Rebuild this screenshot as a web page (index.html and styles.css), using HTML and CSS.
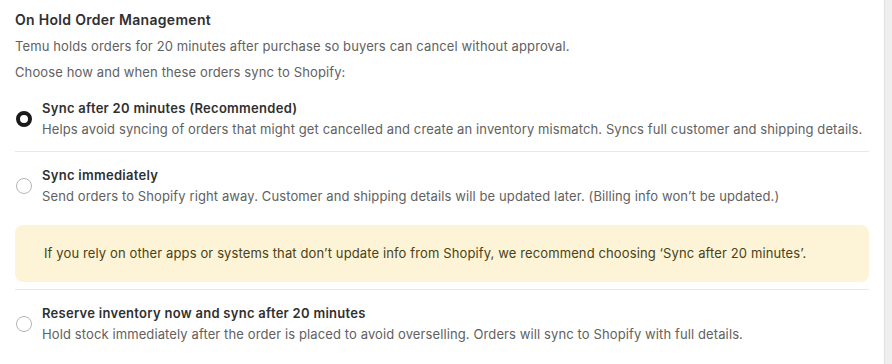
FILE: index.html
```html
<!DOCTYPE html>
<html lang="en">
<head>
<meta charset="utf-8">
<title>On Hold Order Management</title>
<link rel="stylesheet" href="styles.css">
</head>
<body>
<div class="page">
  <main class="content">
    <h2 class="title">On Hold Order Management</h2>
    <p class="intro first">Temu holds orders for 20 minutes after purchase so buyers can cancel without approval.</p>
    <p class="intro second">Choose how and when these orders sync to Shopify:</p>

    <div class="options">
      <label class="option opt-1">
        <span class="radio checked"></span>
        <span class="option-text">
          <span class="option-title">Sync after 20 minutes (Recommended)</span>
          <span class="option-desc">Helps avoid syncing of orders that might get cancelled and create an inventory mismatch. Syncs full customer and shipping details.</span>
        </span>
      </label>
      <div class="divider"></div>
      <label class="option opt-2">
        <span class="radio"></span>
        <span class="option-text">
          <span class="option-title">Sync immediately</span>
          <span class="option-desc">Send orders to Shopify right away. Customer and shipping details will be updated later. (Billing info won’t be updated.)</span>
        </span>
      </label>
      <div class="notice">If you rely on other apps or systems that don’t update info from Shopify, we recommend choosing ‘Sync after 20 minutes’.</div>
      <div class="divider after-notice"></div>
      <label class="option opt-3">
        <span class="radio"></span>
        <span class="option-text">
          <span class="option-title">Reserve inventory now and sync after 20 minutes</span>
          <span class="option-desc">Hold stock immediately after the order is placed to avoid overselling. Orders will sync to Shopify with full details.</span>
        </span>
      </label>
    </div>
  </main>
  <div class="scrollbar"></div>
</div>
</body>
</html>
```
FILE: styles.css
```css
html, body {
  margin: 0;
  padding: 0;
  background: #ffffff;
}
body {
  font-family: Inter, "Noto Sans", "Liberation Sans", sans-serif;
  color: #303030;
  -webkit-font-smoothing: antialiased;
}
.page {
  display: flex;
  width: 892px;
  height: 364px;
  overflow: hidden;
}
.content {
  width: 854px;
  padding-left: 15px;
  padding-top: 10px;
  flex: none;
}
.scrollbar {
  margin-left: auto;
  width: 7px;
  height: 364px;
  background: #efefef;
  border-left: 1px solid #e0e0e0;
}
.title {
  margin: 0;
  font-size: 14px;
  font-weight: 600;
  line-height: 20px;
  letter-spacing: 0.3px;
  color: #303030;
}
.intro {
  margin: 6px 0 0;
  font-size: 13px;
  line-height: 20px;
  letter-spacing: 0.12px;
  color: #616161;
}
.options {
  margin-top: 16px;
  display: flex;
  flex-direction: column;
}
.option {
  display: flex;
  align-items: center;
  gap: 10px;
  padding-left: 1px;
}
.opt-1 { padding-bottom: 12px; }
.opt-2 { padding-top: 13px; }
.opt-3 { padding-top: 13px; }
.radio {
  flex: none;
  width: 16px;
  height: 16px;
  box-sizing: border-box;
  border-radius: 50%;
  border: 1px solid #b5b5b5;
  background: #fff;
}
.radio.checked {
  border: 4.5px solid #1a1a1a;
}
.option-text {
  display: flex;
  flex-direction: column;
}
.option-title {
  font-size: 13px;
  font-weight: 600;
  line-height: 20px;
  letter-spacing: 0.28px;
  color: #303030;
}
.option-desc {
  margin-top: 1px;
  font-size: 13px;
  line-height: 20px;
  letter-spacing: 0.11px;
  color: #616161;
}
.divider {
  height: 1px;
  background: #e8e8e8;
  width: 854px;
}
.notice {
  margin-top: 19px;
  padding: 18px 29px 19px;
  background: #fdf3d6;
  border-radius: 8px;
  font-size: 13px;
  line-height: 20px;
  letter-spacing: 0.12px;
  color: #4a4215;
}
.after-notice {
  margin-top: 7px;
}
```
